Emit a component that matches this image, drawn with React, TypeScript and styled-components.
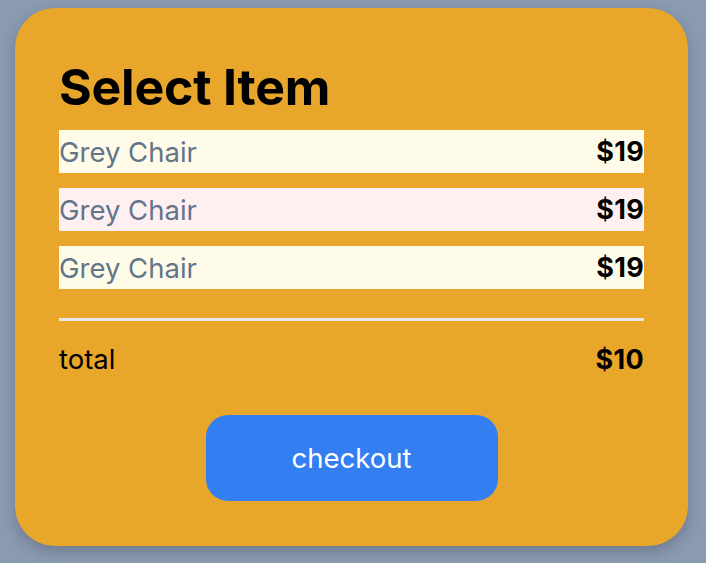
import styled, { createGlobalStyle } from 'styled-components'

const GlobalStyle = createGlobalStyle`
  html, body {
    margin: 0;
    padding: 0;
    background: #8a9ab0;
  }

  body {
    font-family: Inter, 'Liberation Sans', Arial, sans-serif;
  }
`

const Page = styled.div`
  box-sizing: border-box;
  height: 563px;
  padding: 8px 18px 17px 15px;
`

const Card = styled.div`
  background: #e8a62a;
  border-radius: 40px;
  box-shadow: 0 6px 14px rgba(60, 70, 90, 0.35);
  box-sizing: border-box;
  display: flex;
  flex-direction: column;
  height: 538px;
  padding: 44px 44px 45px;
`

const Title = styled.h1`
  color: #000;
  font-size: 50px;
  font-weight: 700;
  letter-spacing: -0.2px;
  line-height: 70px;
  margin: 0 0 8px;
`

const List = styled.div`
  display: flex;
  flex-direction: column;
  gap: 15px;
`

const Row = styled.div<{ $tint: string }>`
  align-items: center;
  background: ${({ $tint }) => $tint};
  display: flex;
  height: 43px;
  justify-content: space-between;
`

const Name = styled.span`
  color: #64748b;
  font-size: 27.5px;
`

const Price = styled.span`
  color: #000;
  font-size: 27px;
  font-weight: 700;
  letter-spacing: 0.3px;
`

const Divider = styled.hr`
  border: 0;
  border-top: 3px solid #e5e7eb;
  margin: 29px 0 0;
`

const TotalRow = styled.div`
  align-items: center;
  display: flex;
  height: 76px;
  justify-content: space-between;
`

const TotalLabel = styled.span`
  color: #000;
  font-size: 27.5px;
`

const Footer = styled.div`
  display: flex;
  justify-content: center;
  margin-top: 18px;
`

const CheckoutButton = styled.button`
  background: #337ef0;
  border: 0;
  border-radius: 22px;
  color: #fff;
  cursor: pointer;
  font-family: inherit;
  font-size: 27.5px;
  height: 86px;
  padding: 0;
  width: 292px;
`

const items = [
  { name: 'Grey Chair', price: 19, tint: '#fefce8' },
  { name: 'Grey Chair', price: 19, tint: '#fef0f0' },
  { name: 'Grey Chair', price: 19, tint: '#fefce8' },
]

export default function App() {
  return (
    <>
      <GlobalStyle />
      <Page>
        <Card>
          <Title>Select Item</Title>
          <List>
            {items.map((item, i) => (
              <Row key={i} $tint={item.tint}>
                <Name>{item.name}</Name>
                <Price>${item.price}</Price>
              </Row>
            ))}
          </List>
          <Divider />
          <TotalRow>
            <TotalLabel>total</TotalLabel>
            <Price>$10</Price>
          </TotalRow>
          <Footer>
            <CheckoutButton>checkout</CheckoutButton>
          </Footer>
        </Card>
      </Page>
    </>
  )
}
